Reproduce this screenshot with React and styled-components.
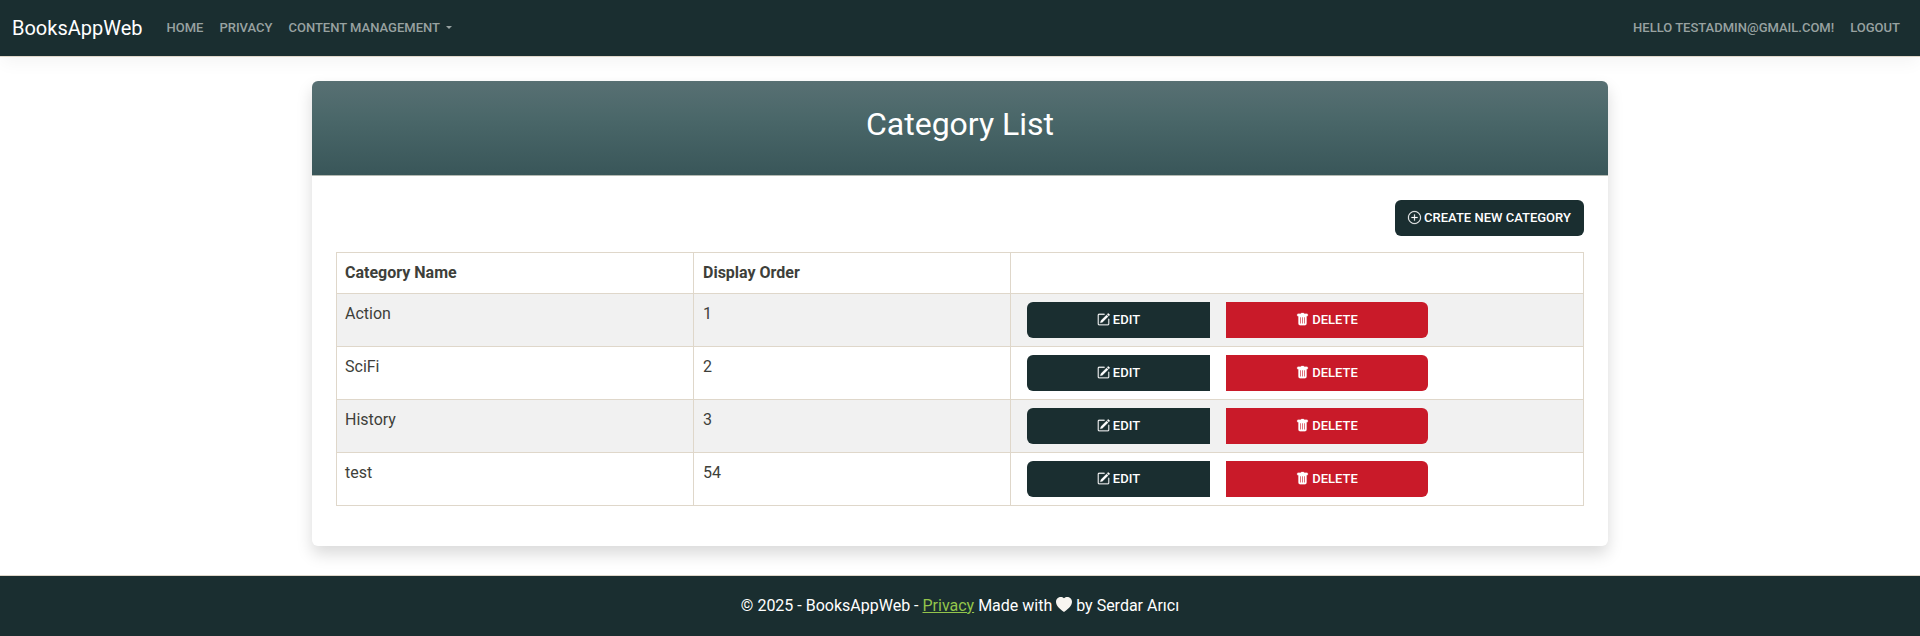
import React from "react";
import styled, { createGlobalStyle } from "styled-components";
import { BsPlusCircle, BsPencilSquare, BsTrashFill, BsHeartFill } from "react-icons/bs";

const GlobalStyle = createGlobalStyle`
  *, *::before, *::after { box-sizing: border-box; }
  body {
    margin: 0;
    background: #fff;
    color: #3e3f3a;
    font: 400 16px/1.5 Roboto, "Liberation Sans", sans-serif;
  }
`;

const Page = styled.div`
  display: flex;
  flex-direction: column;
  min-height: 636px;
`;

const Navbar = styled.header`
  display: flex;
  align-items: center;
  height: 57px;
  padding: 0 20px 0 12px;
  background: #1a2e30;
  border-bottom: 1px solid #dfd7ca;
  box-shadow: 0 8px 16px -2px rgba(0, 0, 0, 0.045);
`;

const Brand = styled.a`
  margin-right: 16px;
  font-size: 20px;
  line-height: 30px;
  color: #fff;
`;

const NavGroup = styled.nav`
  display: flex;
  align-items: center;
  gap: 16px;
  padding-left: 8px;
  margin-left: ${(p) => (p.$end ? "auto" : 0)};
`;

const NavLink = styled.a`
  font-size: 13px;
  line-height: 22px;
  font-weight: 500;
  text-transform: uppercase;
  color: #98a2a1;
  white-space: nowrap;
`;

const Caret = styled.span`
  display: inline-block;
  margin-left: 6px;
  vertical-align: 3px;
  border-top: 3px solid;
  border-left: 3px solid transparent;
  border-right: 3px solid transparent;
`;

const Main = styled.main`
  flex: 1;
  padding: 24px 0 29px;
`;

const Card = styled.section`
  width: 1296px;
  height: 465px;
  margin: 0 auto;
  background: #fff;
  border-radius: 6px;
  box-shadow: 0 8px 16px rgba(0, 0, 0, 0.15);
`;

const CardHeader = styled.div`
  height: 95px;
  padding-top: 24px;
  text-align: center;
  background: linear-gradient(#587073, #4a6769 40%, #395659);
  border-bottom: 1px solid #b3b9b2;
  border-radius: 6px 6px 0 0;
`;

const Title = styled.h2`
  margin: 0;
  font-size: 32px;
  line-height: 38px;
  font-weight: 400;
  color: #fff;
`;

const CardBody = styled.div`
  padding: 24px;
`;

const Toolbar = styled.div`
  display: flex;
  justify-content: flex-end;
  margin-bottom: 16px;
`;

const Button = styled.button`
  display: flex;
  align-items: center;
  justify-content: center;
  gap: 3px;
  width: ${(p) => p.$width}px;
  height: 36px;
  padding: 0;
  border: 0;
  border-radius: ${(p) => p.$radius || "6px"};
  background: ${(p) => (p.$danger ? "#c91a29" : "#1a2e30")};
  color: #fff;
  font: 500 13px/22px Roboto, "Liberation Sans", sans-serif;
  text-transform: uppercase;
  white-space: nowrap;

  svg {
    margin-bottom: 1px;
    stroke: currentColor;
    stroke-width: 0.3px;
    overflow: visible;
  }
`;

const Table = styled.table`
  width: 1248px;
  table-layout: fixed;
  border-collapse: collapse;
`;

const HeadCell = styled.th`
  width: ${(p) => p.$width};
  height: 41px;
  padding: 8px;
  border: 1px solid #dfd7ca;
  text-align: left;
  font-weight: 700;

  &:nth-child(2) { padding-left: 9px; }
`;

const Row = styled.tr`
  height: 53px;
  &:nth-child(odd) { background: #f1f1f1; }
`;

const Cell = styled.td`
  padding: 8px;
  border: 1px solid #dfd7ca;
  vertical-align: top;

  &:nth-child(2) { padding-left: 9px; }
`;

const Actions = styled.div`
  display: flex;
  gap: 16px;
  padding-left: 8px;
`;

const Footer = styled.footer`
  display: flex;
  justify-content: center;
  height: 61px;
  padding-top: 18px;
  background: #1a2e30;
  border-top: 1px solid #dfd7ca;
  color: #fff;
  white-space: pre;
`;

const PrivacyLink = styled.a`
  color: #93c54b;
  text-decoration: underline;
`;

const Heart = styled(BsHeartFill)`
  vertical-align: -2px;
  color: #f8f5f0;
`;

const categories = [
  { name: "Action", order: 1 },
  { name: "SciFi", order: 2 },
  { name: "History", order: 3 },
  { name: "test", order: 54 },
];

export default function App() {
  return (
    <Page>
      <GlobalStyle />
      <Navbar>
        <Brand>BooksAppWeb</Brand>
        <NavGroup>
          <NavLink>Home</NavLink>
          <NavLink>Privacy</NavLink>
          <NavLink>Content Management<Caret /></NavLink>
        </NavGroup>
        <NavGroup $end>
          <NavLink>Hello testadmin@gmail.com!</NavLink>
          <NavLink>Logout</NavLink>
        </NavGroup>
      </Navbar>
      <Main>
        <Card>
          <CardHeader>
            <Title>Category List</Title>
          </CardHeader>
          <CardBody>
            <Toolbar>
              <Button $width={189}><BsPlusCircle size={13} />Create New Category</Button>
            </Toolbar>
            <Table>
              <thead>
                <tr>
                  <HeadCell $width="357px">Category Name</HeadCell>
                  <HeadCell $width="317px">Display Order</HeadCell>
                  <HeadCell />
                </tr>
              </thead>
              <tbody>
                {categories.map((c) => (
                  <Row key={c.name}>
                    <Cell>{c.name}</Cell>
                    <Cell>{c.order}</Cell>
                    <Cell>
                      <Actions>
                        <Button $width={183} $radius="6px 0 0 6px"><BsPencilSquare size={13} />Edit</Button>
                        <Button $danger $width={202} $radius="0 6px 6px 0"><BsTrashFill size={13} />Delete</Button>
                      </Actions>
                    </Cell>
                  </Row>
                ))}
              </tbody>
            </Table>
          </CardBody>
        </Card>
      </Main>
      <Footer>
        <span>© 2025 - BooksAppWeb - <PrivacyLink>Privacy</PrivacyLink> Made with <Heart size={16} /> by Serdar Arıcı</span>
      </Footer>
    </Page>
  );
}
